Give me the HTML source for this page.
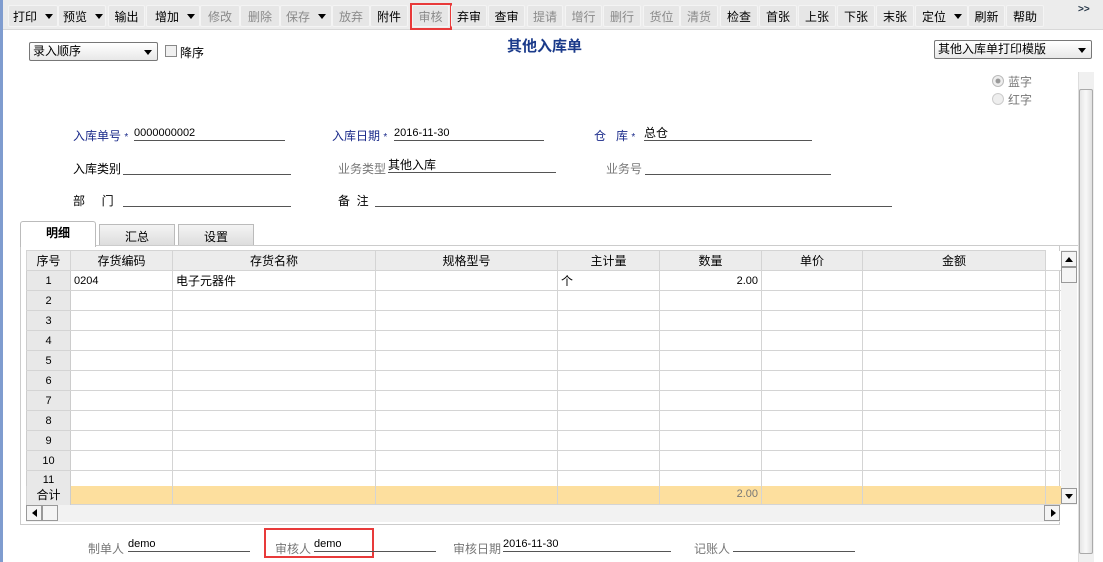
<!DOCTYPE html>
<html><head><meta charset="utf-8"><style>
*{margin:0;padding:0;box-sizing:border-box}
body{width:1103px;height:562px;overflow:hidden;background:#fff;position:relative;font-family:"Liberation Sans","Noto Sans CJK SC","WenQuanYi Zen Hei",sans-serif;font-size:12px;color:#000}
.a{position:absolute}
#tb{left:3px;top:0;width:1100px;height:30px;background:#ececec;border-bottom:1px solid #d8d8d8}
.b{position:absolute;top:5px;height:22px;line-height:22px;background:#e6e6e6;border:1px solid #f4f4f4;border-radius:2px;text-align:center;font-size:12px}
.g{color:#8a8a8a}
.arr{display:inline-block;width:0;height:0;border-left:4px solid transparent;border-right:4px solid transparent;border-top:5px solid #000;margin-left:8px;vertical-align:2px}
.lbl{position:absolute;font-size:12px}
.ul{position:absolute;border-bottom:1px solid #555;height:14px;font-size:11px;line-height:12px}
.blue{color:#1a2a8a}
.gray{color:#777}
table{border-collapse:collapse;table-layout:fixed}
td{border:1px solid #d4d4d4;height:20px;line-height:14px;font-size:11px;padding:0 3px;white-space:nowrap;overflow:hidden}
th{border:1px solid #d4d4d4;height:20px;line-height:14px;font-weight:normal;font-size:12px;background:#ececec}
td.n{background:#e8e8e8;text-align:center;border-color:#d4d4d4 #ccc}
.vl{position:absolute;top:0;width:1px;height:19px;background:#d4d4d4}
</style></head><body>
<div class="a" style="left:0;top:0;width:3px;height:562px;background:#7f9ccf"></div>
<div id="tb" class="a"></div>
<div class="b" style="left:8px;width:50px;text-align:left;padding-left:4px">打印<span class="arr"></span></div>
<div class="b" style="left:58px;width:48px;text-align:left;padding-left:4px">预览<span class="arr"></span></div>
<div class="b" style="left:108px;width:37px">输出</div>
<div class="b" style="left:146px;width:54px;text-align:left;padding-left:8px">增加<span class="arr"></span></div>
<div class="b g" style="left:200px;width:40px">修改</div>
<div class="b g" style="left:240px;width:40px">删除</div>
<div class="b g" style="left:280px;width:52px;text-align:left;padding-left:5px">保存<span class="arr"></span></div>
<div class="b g" style="left:332px;width:38px">放弃</div>
<div class="b" style="left:370px;width:38px">附件</div>
<div class="b g" style="left:412px;width:37px">审核</div>
<div class="a" style="left:410px;top:3px;width:42px;height:27px;border:2px solid #e83a3a"></div>
<div class="b" style="left:451px;width:36px">弃审</div>
<div class="b" style="left:488px;width:37px">查审</div>
<div class="b g" style="left:527px;width:36px">提请</div>
<div class="b g" style="left:565px;width:37px">增行</div>
<div class="b g" style="left:603px;width:38px">删行</div>
<div class="b g" style="left:643px;width:37px">货位</div>
<div class="b g" style="left:680px;width:38px">清货</div>
<div class="b" style="left:720px;width:38px">检查</div>
<div class="b" style="left:759px;width:38px">首张</div>
<div class="b" style="left:798px;width:38px">上张</div>
<div class="b" style="left:837px;width:38px">下张</div>
<div class="b" style="left:876px;width:38px">末张</div>
<div class="b" style="left:915px;width:53px;text-align:left;padding-left:6px">定位<span class="arr"></span></div>
<div class="b" style="left:968px;width:37px">刷新</div>
<div class="b" style="left:1006px;width:38px">帮助</div>
<div class="a" style="left:1078px;top:4px;font-size:10px;font-weight:bold;color:#234">&gt;&gt;</div>

<div class="a" style="left:29px;top:42px;width:129px;height:19px;border:1px solid #777;border-radius:2px;background:linear-gradient(#fff,#e8e8e8);padding-left:3px;line-height:17px">录入顺序<span style="position:absolute;right:5px;top:7px;border-left:4px solid transparent;border-right:4px solid transparent;border-top:5px solid #000"></span></div>
<div class="a" style="left:165px;top:45px;width:12px;height:12px;border:1px solid #888;background:#f0f0f0"></div>
<div class="lbl" style="left:180px;top:44px">降序</div>
<div class="a" style="left:507px;top:35px;font-size:15px;font-weight:bold;color:#1a3a8a">其他入库单</div>
<div class="a" style="left:934px;top:40px;width:158px;height:19px;border:1px solid #777;border-radius:2px;background:linear-gradient(#fff,#e8e8e8);padding-left:3px;line-height:17px">其他入库单打印模版<span style="position:absolute;right:5px;top:7px;border-left:4px solid transparent;border-right:4px solid transparent;border-top:5px solid #000"></span></div>
<div class="a" style="left:992px;top:75px;width:12px;height:12px;border-radius:50%;border:1px solid #bbb;background:radial-gradient(#999 30%,#eee 40%)"></div>
<div class="lbl gray" style="left:1008px;top:73px">蓝字</div>
<div class="a" style="left:992px;top:93px;width:12px;height:12px;border-radius:50%;border:1px solid #ccc;background:#eee"></div>
<div class="lbl gray" style="left:1008px;top:91px">红字</div>

<div class="lbl blue" style="left:73px;top:127px">入库单号 <span style="font-size:10px">*</span></div>
<div class="ul" style="left:134px;top:127px;width:151px">0000000002</div>
<div class="lbl blue" style="left:332px;top:127px">入库日期 <span style="font-size:10px">*</span></div>
<div class="ul" style="left:394px;top:127px;width:150px">2016-11-30</div>
<div class="lbl blue" style="left:594px;top:127px">仓&nbsp;&nbsp;&nbsp;库 <span style="font-size:10px">*</span></div>
<div class="ul" style="left:644px;top:127px;width:168px;font-size:12px">总仓</div>
<div class="lbl" style="left:73px;top:160px">入库类别</div>
<div class="ul" style="left:123px;top:161px;width:168px"></div>
<div class="lbl gray" style="left:338px;top:160px">业务类型</div>
<div class="ul" style="left:388px;top:159px;width:168px;font-size:12px">其他入库</div>
<div class="lbl gray" style="left:606px;top:160px">业务号</div>
<div class="ul" style="left:645px;top:161px;width:186px"></div>
<div class="lbl" style="left:73px;top:192px">部&nbsp;&nbsp;&nbsp;&nbsp;&nbsp;门</div>
<div class="ul" style="left:123px;top:193px;width:168px"></div>
<div class="lbl" style="left:338px;top:192px">备&nbsp;&nbsp;注</div>
<div class="ul" style="left:375px;top:193px;width:517px"></div>

<div class="a" style="left:1078px;top:72px;width:16px;height:490px;background:#f0f0f0;border-left:1px solid #ddd"></div>
<div class="a" style="left:1079px;top:89px;width:14px;height:465px;background:linear-gradient(90deg,#e6e6e6,#f8f8f8,#e0e0e0);border:1px solid #aaa;border-radius:2px"></div>

<div class="a" style="left:20px;top:245px;width:1040px;height:280px;border:1px solid #ccc;border-top:none;background:#fff"></div>
<div class="a" style="left:20px;top:245px;width:1058px;height:1px;background:#ccc"></div>
<div class="a" style="left:20px;top:221px;width:76px;height:26px;background:#fff;border:1px solid #bbb;border-bottom:none;border-radius:3px 3px 0 0;text-align:center;line-height:22px;font-weight:bold">明细</div>
<div class="a" style="left:99px;top:224px;width:76px;height:21px;background:linear-gradient(#f4f4f4,#ddd);border:1px solid #bbb;border-bottom:none;text-align:center;line-height:24px">汇总</div>
<div class="a" style="left:178px;top:224px;width:76px;height:21px;background:linear-gradient(#f4f4f4,#ddd);border:1px solid #bbb;border-bottom:none;text-align:center;line-height:24px">设置</div>

<div class="a" style="left:26px;top:250px;width:1036px;height:236px;overflow:hidden">
<table>
<colgroup><col style="width:44px"><col style="width:102px"><col style="width:203px"><col style="width:182px"><col style="width:102px"><col style="width:102px"><col style="width:101px"><col style="width:183px"><col style="width:16px"></colgroup>
<tr><th>序号</th><th>存货编码</th><th>存货名称</th><th>规格型号</th><th>主计量</th><th>数量</th><th>单价</th><th>金额</th><th style="background:#fff;border:none"></th></tr>
<tr><td class="n">1</td><td>0204</td><td style="font-size:12px">电子元器件</td><td></td><td style="font-size:12px">个</td><td style="text-align:right">2.00</td><td></td><td></td><td></td></tr>
<tr><td class="n">2</td><td></td><td></td><td></td><td></td><td></td><td></td><td></td><td></td></tr>
<tr><td class="n">3</td><td></td><td></td><td></td><td></td><td></td><td></td><td></td><td></td></tr>
<tr><td class="n">4</td><td></td><td></td><td></td><td></td><td></td><td></td><td></td><td></td></tr>
<tr><td class="n">5</td><td></td><td></td><td></td><td></td><td></td><td></td><td></td><td></td></tr>
<tr><td class="n">6</td><td></td><td></td><td></td><td></td><td></td><td></td><td></td><td></td></tr>
<tr><td class="n">7</td><td></td><td></td><td></td><td></td><td></td><td></td><td></td><td></td></tr>
<tr><td class="n">8</td><td></td><td></td><td></td><td></td><td></td><td></td><td></td><td></td></tr>
<tr><td class="n">9</td><td></td><td></td><td></td><td></td><td></td><td></td><td></td><td></td></tr>
<tr><td class="n">10</td><td></td><td></td><td></td><td></td><td></td><td></td><td></td><td></td></tr>
<tr><td class="n" style="vertical-align:top;padding-top:2px">11</td><td></td><td></td><td></td><td></td><td></td><td></td><td></td><td></td></tr>
</table>
</div>
<div class="a" style="left:26px;top:486px;width:1035px;height:19px;background:#fddf9e;border-bottom:1px solid #d4d4d4">
<div class="a" style="left:0;top:0;width:45px;height:19px;background:#e8e8e8;border-right:1px solid #ccc;border-left:1px solid #d4d4d4;text-align:center;line-height:19px;font-size:12px">合计</div>
<div class="vl" style="left:146px"></div><div class="vl" style="left:349px"></div><div class="vl" style="left:531px"></div><div class="vl" style="left:633px"></div><div class="vl" style="left:735px"></div><div class="vl" style="left:836px"></div><div class="vl" style="left:1019px"></div>
<div class="a" style="left:680px;top:2px;width:52px;text-align:right;font-size:11px;color:#777">2.00</div>
</div>
<div class="a" style="left:1061px;top:250px;width:16px;height:255px;background:#f2f2f2"></div>
<div class="a" style="left:1061px;top:251px;width:16px;height:16px;background:#f4f4f4;border:1px solid #999"><span style="position:absolute;left:3px;top:5px;border-left:4px solid transparent;border-right:4px solid transparent;border-bottom:5px solid #000"></span></div>
<div class="a" style="left:1061px;top:267px;width:16px;height:16px;background:#f4f4f4;border:1px solid #999"></div>
<div class="a" style="left:1061px;top:488px;width:16px;height:16px;background:#f4f4f4;border:1px solid #999"><span style="position:absolute;left:3px;top:5px;border-left:4px solid transparent;border-right:4px solid transparent;border-top:5px solid #000"></span></div>
<div class="a" style="left:26px;top:505px;width:1034px;height:17px;background:#f2f2f2"></div>
<div class="a" style="left:26px;top:505px;width:16px;height:16px;background:#f4f4f4;border:1px solid #999"><span style="position:absolute;left:5px;top:3px;border-top:4px solid transparent;border-bottom:4px solid transparent;border-right:5px solid #000"></span></div>
<div class="a" style="left:42px;top:505px;width:16px;height:16px;background:#f4f4f4;border:1px solid #999"></div>
<div class="a" style="left:1044px;top:505px;width:16px;height:16px;background:#f4f4f4;border:1px solid #999"><span style="position:absolute;left:6px;top:3px;border-top:4px solid transparent;border-bottom:4px solid transparent;border-left:5px solid #000"></span></div>

<div class="lbl gray" style="left:88px;top:540px">制单人</div>
<div class="ul" style="left:128px;top:538px;width:122px">demo</div>
<div class="a" style="left:264px;top:528px;width:110px;height:30px;border:2px solid #e83a3a"></div>
<div class="lbl gray" style="left:275px;top:540px">审核人</div>
<div class="ul" style="left:314px;top:538px;width:122px">demo</div>
<div class="lbl gray" style="left:453px;top:540px">审核日期</div>
<div class="ul" style="left:503px;top:538px;width:168px">2016-11-30</div>
<div class="lbl gray" style="left:694px;top:540px">记账人</div>
<div class="ul" style="left:733px;top:538px;width:122px"></div>
</body></html>
